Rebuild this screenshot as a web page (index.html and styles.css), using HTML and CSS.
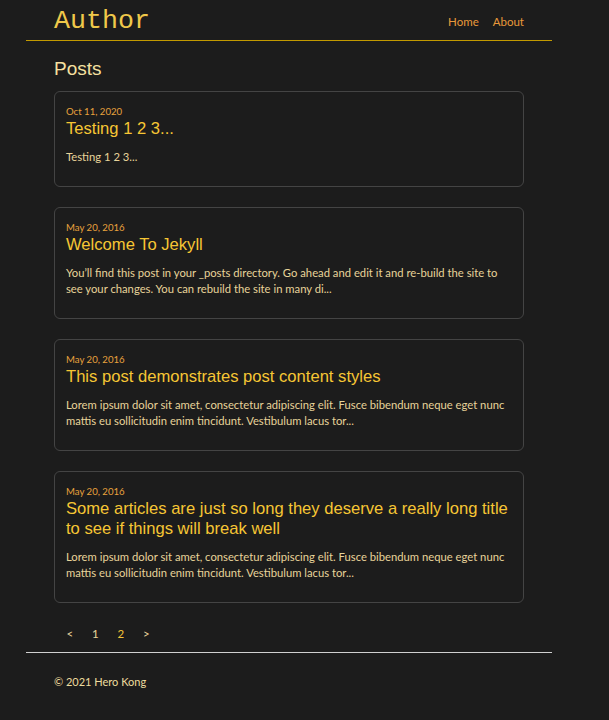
FILE: index.html
```html
<!DOCTYPE html>
<html lang="en">
<head>
<meta charset="utf-8">
<title>Author</title>
<link rel="stylesheet" href="styles.css">
</head>
<body>
<div class="page">
  <header class="site-header">
    <a class="site-title" href="#">Author</a>
    <nav class="site-nav">
      <a href="#">Home</a>
      <a href="#">About</a>
    </nav>
  </header>
  <main class="content">
    <h1 class="page-heading">Posts</h1>
    <ul class="post-list">
      <li class="post-card">
        <span class="post-meta">Oct 11, 2020</span>
        <h2 class="post-title">Testing 1 2 3...</h2>
        <p class="post-excerpt">Testing 1 2 3...</p>
      </li>
      <li class="post-card">
        <span class="post-meta">May 20, 2016</span>
        <h2 class="post-title">Welcome To Jekyll</h2>
        <p class="post-excerpt">You’ll find this post in your _posts directory. Go ahead and edit it and re-build the site to see your changes. You can rebuild the site in many di...</p>
      </li>
      <li class="post-card">
        <span class="post-meta">May 20, 2016</span>
        <h2 class="post-title">This post demonstrates post content styles</h2>
        <p class="post-excerpt">Lorem ipsum dolor sit amet, consectetur adipiscing elit. Fusce bibendum neque eget nunc mattis eu sollicitudin enim tincidunt. Vestibulum lacus tor...</p>
      </li>
      <li class="post-card">
        <span class="post-meta">May 20, 2016</span>
        <h2 class="post-title">Some articles are just so long they deserve a really long title to see if things will break well</h2>
        <p class="post-excerpt">Lorem ipsum dolor sit amet, consectetur adipiscing elit. Fusce bibendum neque eget nunc mattis eu sollicitudin enim tincidunt. Vestibulum lacus tor...</p>
      </li>
    </ul>
    <div class="pagination">
      <a href="#">&lt;</a>
      <a href="#">1</a>
      <a class="current" href="#">2</a>
      <a href="#">&gt;</a>
    </div>
  </main>
  <footer class="site-footer">
    <p>© 2021 Hero Kong</p>
  </footer>
</div>
</body>
</html>
```

FILE: styles.css
```css
html, body {
  margin: 0;
  padding: 0;
  background: #1c1c1c;
}

body {
  font-family: Lato, "Open Sans", sans-serif;
  color: #e8d49a;
}

a {
  text-decoration: none;
}

.page {
  width: 526px;
  margin-left: 26px;
}

.site-header {
  height: 40px;
  border-bottom: 1px solid #c29a00;
  padding: 0 28px;
  display: flex;
  justify-content: space-between;
  align-items: center;
}

.site-title {
  font-family: "Liberation Mono", monospace;
  font-size: 26.67px;
  line-height: 40px;
  color: #efc84a;
  padding-top: 1px;
}

.site-nav {
  display: flex;
  gap: 14px;
  padding-top: 2px;
}

.site-nav a {
  font-size: 11.5px;
  color: #e8993a;
}

.content {
  padding: 0 28px;
}

.page-heading {
  font-family: "Liberation Sans", Arial, sans-serif;
  font-weight: normal;
  font-size: 19px;
  line-height: 22px;
  color: #f5e0a0;
  margin: 17px 0 11px;
}

.post-list {
  list-style: none;
  margin: 0;
  padding: 0;
  display: flex;
  flex-direction: column;
  gap: 20px;
}

.post-card {
  border: 1px solid #444;
  border-radius: 6px;
  padding: 13px 11px 11px;
}

.post-meta {
  display: block;
  font-size: 9.6px;
  line-height: 14px;
  color: #e8a23c;
}

.post-title {
  font-family: "Liberation Sans", Arial, sans-serif;
  font-weight: normal;
  font-size: 16.6px;
  line-height: 20px;
  color: #f6c634;
  margin: 0;
}

.post-excerpt {
  font-size: 11.25px;
  line-height: 16px;
  margin: 10px 0;
  color: #e8d49a;
}

.pagination {
  display: flex;
  padding: 22px 0 10px 3px;
}

.pagination a {
  width: 25.5px;
  text-align: center;
  font-size: 11.5px;
  line-height: 17px;
  color: #e8d49a;
}

.pagination a.current {
  color: #f2c338;
}

.site-footer {
  border-top: 1px solid #d0d0d0;
  padding: 0 28px;
}

.site-footer p {
  margin: 20px 0;
  font-size: 11px;
  line-height: 17px;
  color: #eedc9e;
}
```
